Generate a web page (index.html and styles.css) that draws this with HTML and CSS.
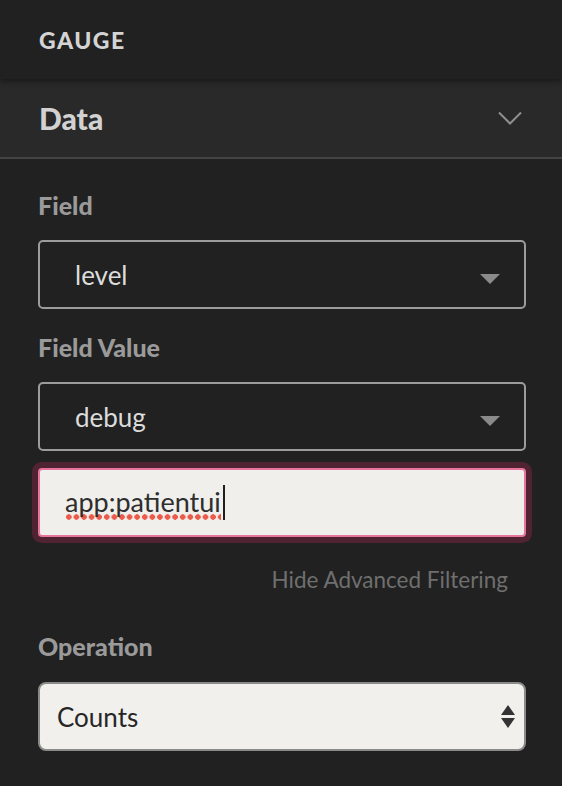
FILE: index.html
```html
<!DOCTYPE html>
<html lang="en">
<head>
<meta charset="utf-8">
<title>Gauge</title>
<link rel="stylesheet" href="styles.css">
</head>
<body>
<header class="panel-title">GAUGE</header>
<div class="section-head">
  <span class="section-name">Data</span>
  <svg class="chevron" width="24" height="14" viewBox="0 0 24 14"><path d="M1 1.5 L12 12.5 L23 1.5" fill="none" stroke="#8f8f8f" stroke-width="2"/></svg>
</div>
<main class="content">
  <div class="label">Field</div>
  <div class="select dark">
    <span class="value">level</span>
    <svg class="tri" width="20" height="10" viewBox="0 0 20 10"><path d="M0 0 H20 L10 10 Z" fill="#8a8a8a"/></svg>
  </div>
  <div class="label gap">Field Value</div>
  <div class="select dark">
    <span class="value">debug</span>
    <svg class="tri" width="20" height="10" viewBox="0 0 20 10"><path d="M0 0 H20 L10 10 Z" fill="#8a8a8a"/></svg>
  </div>
  <div class="text-input">
    <span class="typed">app:patientui</span><span class="caret"></span>
  </div>
  <div class="toggle-link">Hide Advanced Filtering</div>
  <div class="label op">Operation</div>
  <div class="select light">
    <span class="value">Counts</span>
    <svg class="updown" width="16" height="24" viewBox="0 0 16 24"><path d="M8 0 L15 10 H1 Z M1 13 H15 L8 23 Z" fill="#333"/></svg>
  </div>
</main>
</body>
</html>
```

FILE: styles.css
```css
* { box-sizing: border-box; }
body {
  margin: 0;
  background: #212121;
  font-family: Lato, "Open Sans", sans-serif;
  height: 786px;
  overflow: hidden;
}
.panel-title {
  position: relative;
  z-index: 1;
  height: 79px;
  display: flex;
  align-items: center;
  padding-left: 39px;
  background: #212121;
  color: #d4d4d4;
  font-size: 23px;
  font-weight: 900;
  letter-spacing: 1.5px;
  box-shadow: 0 2px 6px rgba(0,0,0,0.45);
}
.section-head {
  height: 80px;
  background: #292929;
  border-bottom: 2px solid #444;
  display: flex;
  align-items: center;
  justify-content: space-between;
  padding: 0 40px 0 39px;
}
.section-name {
  color: #d2d2d2;
  font-size: 30px;
  font-weight: 900;
}
.chevron { display: block; }
.content {
  padding: 31px 36px 0 38px;
}
.label {
  color: #9a9a9a;
  font-size: 25px;
  font-weight: 900;
  line-height: 30px;
  margin-bottom: 20px;
}
.label.gap { margin-top: 23px; }
.label.op { margin-top: 37px; margin-bottom: 21px; }
.select {
  height: 69px;
  border-radius: 5px;
  display: flex;
  align-items: center;
  justify-content: space-between;
  font-size: 26px;
}
.select.dark {
  border: 2px solid #9c9c9c;
  padding: 0 24px 0 35px;
  color: #dcdcdc;
}
.select.light {
  background: #f1f0ec;
  border: 2px solid #8a8a8a;
  border-radius: 8px;
  padding: 0 8px 0 17px;
  color: #262626;
}
.tri { display: block; margin-top: 8px; }
.updown { display: block; }
.text-input {
  margin-top: 17px;
  height: 69px;
  background: #f0efeb;
  border: 2px solid #e6749c;
  border-radius: 4px;
  box-shadow: 0 0 0 6px #4f2331;
  display: flex;
  align-items: center;
  padding-left: 25px;
  font-size: 27px;
  color: #2e2e2e;
}
.typed {
  background-image: radial-gradient(circle, #ec5a4a 2.5px, transparent 3px);
  background-size: 7.6px 6px;
  background-repeat: repeat-x;
  background-position: 0 100%;
  padding-bottom: 2px;
}
.caret {
  display: inline-block;
  width: 2px;
  height: 35px;
  background: #1e1e1e;
  margin-left: 2px;
}
.toggle-link {
  margin-top: 29px;
  text-align: right;
  padding-right: 18px;
  color: #6f6f6f;
  font-size: 22.5px;
  line-height: 28px;
}
```
